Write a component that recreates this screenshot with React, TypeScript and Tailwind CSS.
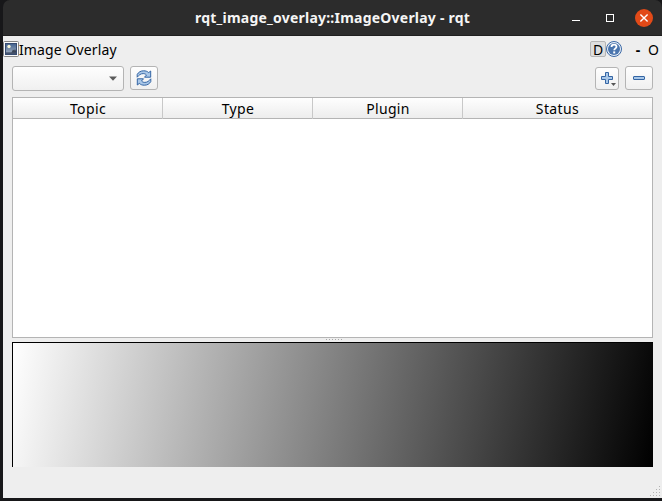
import React from "react";

const button =
  "flex items-center justify-center rounded-[3px] border border-[#b4b4b4] bg-linear-to-b from-[#fefefe] to-[#f0f0f0]";

function TitleBar() {
  return (
    <header className="flex h-9 shrink-0 items-center rounded-t-[7px] border-b border-[#1f1f1f] bg-[#2c2c2c] pr-[9px] text-[#f5f5f5]">
      <h1 className="ml-[192px] w-[276px] whitespace-nowrap text-[14px] leading-5 font-bold tracking-[0.22px]">
        rqt_image_overlay::ImageOverlay - rqt
      </h1>
      <div className="ml-auto flex items-center">
        <svg width="8" height="12" viewBox="0 0 8 12" shapeRendering="crispEdges">
          <path d="M0 8h8v1H0z" fill="#fff" />
        </svg>
        <svg className="ml-[26px]" width="8" height="8" viewBox="0 0 8 8" shapeRendering="crispEdges">
          <path d="M.5.5h7v7h-7z" fill="none" stroke="#fff" />
        </svg>
        <svg className="ml-[21px]" width="18" height="18" viewBox="0 0 18 18">
          <circle cx="9" cy="9" r="9" fill="#e24a18" />
          <path d="M5.4 5.4l7.2 7.2M12.6 5.4l-7.2 7.2" stroke="#fff" strokeWidth="1.4" />
        </svg>
      </div>
    </header>
  );
}

function PictureIcon() {
  return (
    <svg width="16" height="16" viewBox="0 0 16 16">
      <defs>
        <linearGradient id="sky" x1="0" y1="0" x2="0" y2="1">
          <stop offset="0" stopColor="#41618f" />
          <stop offset="1" stopColor="#a9b5c2" />
        </linearGradient>
      </defs>
      <rect x=".5" y=".5" width="15" height="15" rx="1" fill="#fafafa" stroke="#858585" />
      <rect x="2.5" y="2.5" width="11" height="11" fill="url(#sky)" stroke="#364b70" />
      <circle cx="6" cy="5.5" r="1.7" fill="#f6f6d8" />
      <path d="M8.500 11.500l1.500-3 1.200 1 .8-1.500 1 2v2H8.500z" fill="#3b4456" />
      <path d="M3 11.300h10V13H3z" fill="#44526c" />
    </svg>
  );
}

function HelpIcon() {
  return (
    <svg width="16" height="16" viewBox="0 0 16 16">
      <circle cx="8" cy="8" r="7.5" fill="#e9f0f8" stroke="#3b68a5" />
      <circle cx="8" cy="8" r="6" fill="#4a75ae" />
      <path d="M5.5 6.1c0-1.6 1-2.4 2.500-2.400s2.500.8 2.500 2.100c0 1.600-2.300 1.600-2.300 3.500" fill="none" stroke="#fff" strokeWidth="1.8" />
      <rect x="7.2" y="10.4" width="2" height="2" fill="#fff" />
    </svg>
  );
}

function RefreshIcon() {
  return (
    <svg width="16" height="16" viewBox="0 0 16 16" fill="#a9c7e8" stroke="#3465a4" strokeWidth="1" strokeLinejoin="round">
      <path d="M1.200 7.200V4.500C2.500 2 4.800.8 7.700.8c2 0 3.700.6 5 1.800l2-1.600v6.200H8.500l2-2.200C9.600 4 8.500 3.600 7.200 3.600 4.600 3.600 3 5 1.200 7.200z" />
      <path d="M14.800 8.800v2.700c-1.300 2.500-3.600 3.700-6.500 3.700-2 0-3.700-.6-5-1.800l-2 1.600V8.800h6.200l-2 2.200c.9 1 2 1.400 3.300 1.400 2.600 0 4.200-1.400 6-3.600z" />
    </svg>
  );
}

function PluginBar() {
  return (
    <div className="flex h-[26px] shrink-0 items-center text-[14px] leading-5 text-black">
      <PictureIcon />
      <span className="mt-[2px] tracking-[0.12px] whitespace-nowrap">Image Overlay</span>
      <div className="ml-auto flex items-center">
        <button className="flex h-4 w-4 items-center justify-center rounded-[2px] border border-[#b5b5b5] bg-[#dedede] pt-[2px] text-[14px]">D</button>
        <HelpIcon />
        <span className="ml-[13px] w-[6px] pt-[2px] text-center font-bold">-</span>
        <span className="ml-[7px] w-[14px] pt-[2px]">O</span>
      </div>
    </div>
  );
}

function Toolbar() {
  return (
    <div className="ml-[9px] mr-[9px] mt-1 flex h-[25px] shrink-0 items-start">
      <button className={`${button} h-[25px] w-28`}>
        <svg className="ml-auto mr-[6px]" width="8" height="5" viewBox="0 0 8 5">
          <path d="M0 .5h8L4 4.8z" fill="#5b5b5b" />
        </svg>
      </button>
      <button className={`${button} ml-1.5 h-6 w-7`}>
        <RefreshIcon />
      </button>
      <button className={`${button} relative ml-auto mt-px h-[23px] w-6 pb-[2px]`}>
        <svg width="14" height="14" viewBox="0 0 14 14">
          <path d="M5.5 1.5h3v4h4v3h-4v4h-3v-4h-4v-3h4z" fill="#a8c7e8" stroke="#3465a4" strokeLinejoin="round" />
        </svg>
        <svg className="absolute right-[2px] bottom-[3px]" width="5" height="3" viewBox="0 0 5 3">
          <path d="M0 0h5L2.5 3z" fill="#555" />
        </svg>
      </button>
      <button className={`${button} ml-1.5 h-6 w-7`}>
        <svg width="12" height="4" viewBox="0 0 12 4">
          <rect x=".5" y=".5" width="11" height="3" rx=".5" fill="#a8c7e8" stroke="#3465a4" />
        </svg>
      </button>
    </div>
  );
}

function OverlayTable() {
  return (
    <section className="mx-[9px] mt-1.5 h-[241px] shrink-0 border border-[#b4b4b4] bg-white">
      <div className="grid h-[21px] grid-cols-[150px_150px_150px_1fr] border-b border-[#b4b4b4] bg-linear-to-b from-[#fefefe] to-[#ededed] text-center text-[14px] leading-[21px] text-black">
        <div className="border-r border-[#c8c8c8] pl-px tracking-[0.4px]">Topic</div>
        <div className="border-r border-[#c8c8c8] pl-px tracking-[0.4px]">Type</div>
        <div className="border-r border-[#c8c8c8] pl-px tracking-[0.3px]">Plugin</div>
        <div className="tracking-[0.4px]">Status</div>
      </div>
    </section>
  );
}

function Splitter() {
  return (
    <div className="flex h-1 shrink-0 items-start justify-center gap-[2px] pt-px pl-[3px]">
      {[0, 1, 2, 3, 4, 5].map((i) => (
        <i key={i} className="h-px w-px bg-[#a8a8a8]" />
      ))}
    </div>
  );
}

function SizeGrip() {
  return (
    <svg className="mt-auto ml-auto mb-[2px] mr-[2px]" width="10" height="10" viewBox="0 0 10 10" fill="#b2b2b2" shapeRendering="crispEdges">
      <path d="M9 0h1v1H9zM6 3h1v1H6zM9 3h1v1H9zM3 6h1v1H3zM6 6h1v1H6zM9 6h1v1H9zM0 9h1v1H0zM3 9h1v1H3zM6 9h1v1H6zM9 9h1v1H9z" />
    </svg>
  );
}

export default function App() {
  return (
    <div className="flex h-[501px] w-[662px] flex-col overflow-hidden bg-[#171719] pb-[3px] pl-[3px] font-['Noto_Sans','Open_Sans',sans-serif]">
      <TitleBar />
      <main className="flex min-h-0 flex-1 flex-col bg-[#eeeeee]">
        <PluginBar />
        <Toolbar />
        <OverlayTable />
        <Splitter />
        <div className="mx-[9px] h-[125px] shrink-0 border-t border-l border-black bg-[linear-gradient(101deg,#fff,#000)]" />
        <SizeGrip />
      </main>
    </div>
  );
}
